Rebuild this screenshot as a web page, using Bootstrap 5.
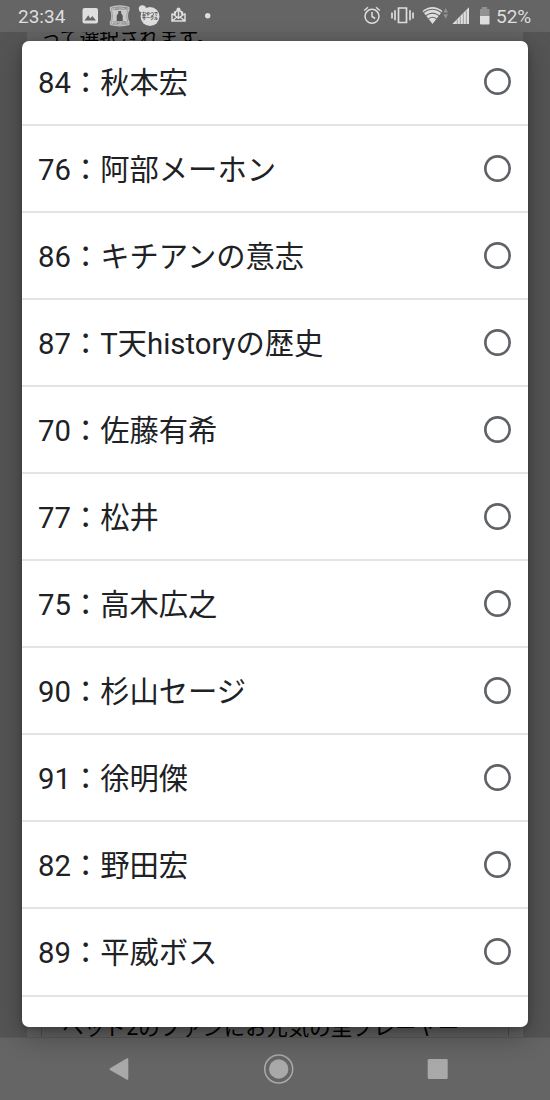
<!DOCTYPE html>
<html lang="ja">
<head>
<meta charset="utf-8">
<meta name="viewport" content="width=device-width, initial-scale=1">
<title>選択</title>
<link href="https://cdn.jsdelivr.net/npm/bootstrap@5.3.0/dist/css/bootstrap.min.css" rel="stylesheet">
<style>
body{font-family:Roboto,"Noto Sans CJK JP",sans-serif;background:#555}
.screen{width:550px;height:1100px}
.status-bar{height:32px;background:#656565;color:#dedede;z-index:1}
.clock{font-size:19px;line-height:33px;width:72px;padding-left:18px;white-space:nowrap}
.page-body{height:1005px;padding:0 27px;background:repeating-conic-gradient(#525252 0 25%,#585858 0 50%) 0 0/2px 2px}
.sheet{background:#626262;color:#000}
.sheet-text{font-size:19.8px;line-height:24px;margin:-5px 0 0 14px;white-space:nowrap}
.field-box{height:50px;margin:0 14px;border:1px solid #505050;border-width:0 1px;padding:26px 0 0 20px;font-size:21.4px;line-height:30px;white-space:nowrap}
.nav-keys{height:63px;background:#656565;border-top:1px solid #5a5a5a}
.picker{top:40.5px;left:22px;width:506px;height:986px;border-radius:7px;background:#fff;box-shadow:0 9px 28px rgba(0,0,0,.32),0 2px 6px rgba(0,0,0,.2);z-index:2}
.options{margin-top:-2px}
.option{height:87.1px;border-bottom:2px solid #e4e4e4;padding:0 17px 0 16px;font-size:29.3px;line-height:40px;color:#202124;white-space:nowrap}
.option-name{padding-top:3px}
.ring{width:27px;height:27px;box-shadow:inset 0 0 0 2.7px #5f6368;border-radius:50%}
svg{display:block;flex:none}
</style>
</head>
<body>
<div class="screen position-relative overflow-hidden d-flex flex-column">
  <header class="status-bar position-relative d-flex flex-shrink-0">
    <div class="clock">23:34</div>
    <svg width="150" height="32" viewBox="72 0 150 32" fill="#dedede">
      <path fill-rule="evenodd" d="M84.500 8h11.500q2 0 2 2v11.500q0 2-2 2H84.500q-2 0-2-2V10q0-2 2-2zM84.500 20.500h11.500l-3.700-4.500-2 2.500-2-3.200z"/>
      <path fill="#c8c8c8" d="M110 7q9.700-3.500 19.400 0 .8 3-1 5.500-.6 3.500 0 7 2.200 3 1 5.500-9.700 2.800-19.400 0-1.200-2.500 1-5.500.6-3.500 0-7-1.800-2.500-1-5.500z"/>
      <path fill="none" stroke="#8a8a8a" stroke-width=".6" d="M111.200 8q8.500-2.800 17 0-3 8 0 16-8.500 2.400-17 0 3-8 0-16z"/>
      <path fill="#555" d="M118.300 11h2.800v2.200l1.600 2.300V21h-6v-5.500l1.600-2.300z"/>
      <text x="119.700" y="10" font-size="3.600" text-anchor="middle" fill="#666">LAWSON</text>
      <text x="119.700" y="24.400" font-size="3.400" text-anchor="middle" fill="#666">STATION</text>
      <circle cx="142.400" cy="8.800" r="3.600"/><circle cx="150" cy="16.500" r="9.400"/>
      <g fill="#333" font-size="4" font-weight="700" text-anchor="middle"><text x="150" y="16.300">おやつで</text><text x="150" y="20.300">サークル</text></g>
      <path fill="none" stroke="#dedede" stroke-width="1.500" d="M172 13.500V21h13v-7.500M172 13.500l6.500 4.700 6.500-4.700M172 21l5-4M185 21l-5-4M175 15v-3l3.500-1.800L182 12v3M178.500 10v7"/>
      <circle cx="178.500" cy="9.400" r="2"/><circle cx="175" cy="13" r="1.300"/><circle cx="182" cy="13" r="1.300"/>
      <circle cx="207.700" cy="15.800" r="2.700"/>
    </svg>
    <svg class="ms-auto" width="146" height="32" viewBox="350 0 146 32" fill="#dedede">
      <g fill="none" stroke="#dedede" stroke-width="1.500"><circle cx="372" cy="16.300" r="7"/><path d="M364.200 10.500l3.800-3.200M379.800 10.500L376 7.300M372 12v4.500l3.200 2"/></g>
      <path fill="none" stroke="#dedede" stroke-width="1.700" d="M398.500 8h8v14.500h-8zM395 10.300v10M410 10.300v10M392 12.500v6M413 12.500v6"/>
      <path d="M422.500 11q10-7.800 20 0l-10 13z"/>
      <path fill="none" stroke="#656565" stroke-width="1.100" d="M423.500 12.500q9-6.500 18 0M426 15.600q6.500-5 13 0M428.500 18.800q4-3 8 0"/>
      <path fill="#929292" d="M443.300 12.500l2.400-4.500 2.400 4.500zM443.300 14.200l2.400 4.500 2.400-4.500z"/>
      <path d="M452.300 24L469 7.300V24z"/><path stroke="#8c8c8c" stroke-width=".8" d="M457.300 19.500V24M460.300 16.500V24M463.300 13.500V24M466.300 10.500V24"/>
      <path fill="#929292" d="M480 9h2V7h5v2h2.500v7H480z"/><path d="M480 16h9.500v7.500q0 1-1 1H481q-1 0-1-1z"/>
    </svg>
    <div class="clock ps-0" style="width:54px">52%</div>
  </header>

  <main class="page-body flex-shrink-0 overflow-hidden">
    <div class="sheet h-100 d-flex flex-column justify-content-between">
      <div class="sheet-text">って選択されます。</div>
      <div class="field-box">ヘッド2のファンにお元気の里プレーヤー<span class="text-danger">"</span></div>
    </div>
  </main>

  <nav class="nav-keys flex-shrink-0">
    <svg width="550" height="62" viewBox="0 1038 550 62" fill="#a9a9a9">
      <path d="M110 1068.200L126.500 1058.500q1.800-.8 1.800 1v19q0 1.800-1.800 1L110 1070q-1-.9 0-1.800z"/>
      <circle cx="278.700" cy="1069" r="9.700"/><circle cx="278.700" cy="1069" r="14" fill="none" stroke="#a9a9a9" stroke-width="1.500"/>
      <rect x="427.700" y="1059" width="20" height="20" rx="1.300"/>
    </svg>
  </nav>

  <section class="picker position-absolute overflow-hidden">
    <div class="options d-flex flex-column">
      <div class="option flex-shrink-0 d-flex align-items-center justify-content-between"><span class="option-name">84：秋本宏</span><span class="ring"></span></div>
      <div class="option flex-shrink-0 d-flex align-items-center justify-content-between"><span class="option-name">76：阿部メーホン</span><span class="ring"></span></div>
      <div class="option flex-shrink-0 d-flex align-items-center justify-content-between"><span class="option-name">86：キチアンの意志</span><span class="ring"></span></div>
      <div class="option flex-shrink-0 d-flex align-items-center justify-content-between"><span class="option-name">87：T天historyの歴史</span><span class="ring"></span></div>
      <div class="option flex-shrink-0 d-flex align-items-center justify-content-between"><span class="option-name">70：佐藤有希</span><span class="ring"></span></div>
      <div class="option flex-shrink-0 d-flex align-items-center justify-content-between"><span class="option-name">77：松井</span><span class="ring"></span></div>
      <div class="option flex-shrink-0 d-flex align-items-center justify-content-between"><span class="option-name">75：高木広之</span><span class="ring"></span></div>
      <div class="option flex-shrink-0 d-flex align-items-center justify-content-between"><span class="option-name">90：杉山セージ</span><span class="ring"></span></div>
      <div class="option flex-shrink-0 d-flex align-items-center justify-content-between"><span class="option-name">91：徐明傑</span><span class="ring"></span></div>
      <div class="option flex-shrink-0 d-flex align-items-center justify-content-between"><span class="option-name">82：野田宏</span><span class="ring"></span></div>
      <div class="option flex-shrink-0 d-flex align-items-center justify-content-between"><span class="option-name">89：平威ボス</span><span class="ring"></span></div>
      <div class="option flex-shrink-0 border-0 d-flex align-items-center justify-content-end"><span class="ring"></span></div>
    </div>
  </section>
</div>
</body>
</html>
